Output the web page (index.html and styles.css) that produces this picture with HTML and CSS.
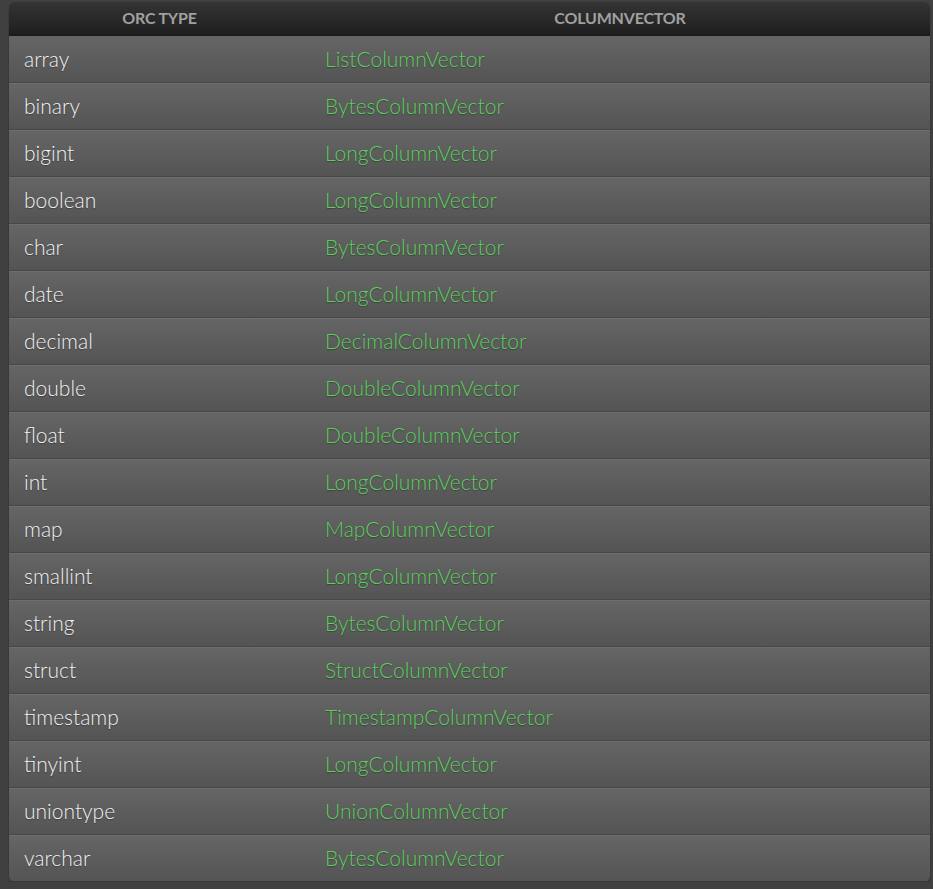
FILE: index.html
```html
<!DOCTYPE html>
<html>
<head>
	<title>ORC Type / ColumnVector</title>
	<meta charset="utf-8">
	<link rel="stylesheet" href="styles.css">
</head>
<body>
	<table class="types">
		<thead>
			<tr><th class="c1">ORC Type</th><th>ColumnVector</th></tr>
		</thead>
		<tbody>
			<tr><td class="c1">array</td><td class="vec">ListColumnVector</td></tr>
			<tr><td class="c1">binary</td><td class="vec">BytesColumnVector</td></tr>
			<tr><td class="c1">bigint</td><td class="vec">LongColumnVector</td></tr>
			<tr><td class="c1">boolean</td><td class="vec">LongColumnVector</td></tr>
			<tr><td class="c1">char</td><td class="vec">BytesColumnVector</td></tr>
			<tr><td class="c1">date</td><td class="vec">LongColumnVector</td></tr>
			<tr><td class="c1">decimal</td><td class="vec">DecimalColumnVector</td></tr>
			<tr><td class="c1">double</td><td class="vec">DoubleColumnVector</td></tr>
			<tr><td class="c1">float</td><td class="vec">DoubleColumnVector</td></tr>
			<tr><td class="c1">int</td><td class="vec">LongColumnVector</td></tr>
			<tr><td class="c1">map</td><td class="vec">MapColumnVector</td></tr>
			<tr><td class="c1">smallint</td><td class="vec">LongColumnVector</td></tr>
			<tr><td class="c1">string</td><td class="vec">BytesColumnVector</td></tr>
			<tr><td class="c1">struct</td><td class="vec">StructColumnVector</td></tr>
			<tr><td class="c1">timestamp</td><td class="vec">TimestampColumnVector</td></tr>
			<tr><td class="c1">tinyint</td><td class="vec">LongColumnVector</td></tr>
			<tr><td class="c1">uniontype</td><td class="vec">UnionColumnVector</td></tr>
			<tr><td class="c1">varchar</td><td class="vec">BytesColumnVector</td></tr>
		</tbody>
	</table>
</body>
</html>
```

FILE: styles.css
```css
html,body{margin:0;padding:0;}
body{background:#404040;font-family:Lato,"Open Sans",sans-serif;padding:2px 3px 0 9px;}
.types{width:921px;border-collapse:separate;border-spacing:0;border-radius:6px;overflow:hidden;box-shadow:0 1px 2px rgba(0,0,0,0.4);}
.types th{height:34px;padding:0 0 2px;background:linear-gradient(#343434,#1e1e1e);color:#a0a0a0;font-size:16px;font-weight:700;text-transform:uppercase;text-align:center;letter-spacing:-0.2px;border-bottom:1px solid #1a1a1a;box-sizing:border-box;}
.types th.c1{width:301px;}
.types td{height:47px;padding:0 0 2px 15px;box-sizing:border-box;background:linear-gradient(#656565,#545454);border-top:1px solid #6e6e6e;border-bottom:1px solid #474747;color:#f2f2f2;font-size:21px;font-weight:300;text-shadow:0 1px 1px rgba(0,0,0,0.3);}
.types td.vec{color:#5ad25a;}
.types tr:first-child td{border-top-color:#666;}
.types tr:last-child td{border-bottom:1px solid #3a3a3a;}
```
